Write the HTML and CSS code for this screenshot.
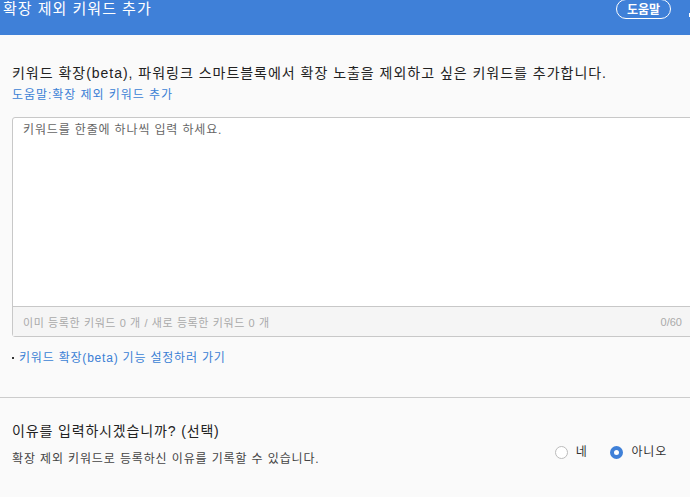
FILE: index.html
```html
<!DOCTYPE html>
<html lang="ko">
<head>
<meta charset="utf-8">
<link rel="stylesheet" href="styles.css">
</head>
<body>
<div class="page">
  <header class="header">
    <h1 class="title">확장 제외 키워드 추가</h1>
    <button class="help-btn">도움말</button>
    <span class="close-edge"></span>
  </header>
  <section class="intro">
    <p class="lead">키워드 확장(beta), 파워링크 스마트블록에서 확장 노출을 제외하고 싶은 키워드를 추가합니다.</p>
    <a class="help-link">도움말:확장 제외 키워드 추가</a>
    <div class="editor">
      <div class="editor-body">키워드를 한줄에 하나씩 입력 하세요.</div>
      <div class="editor-foot">
        <span>이미 등록한 키워드 0 개 / 새로 등록한 키워드 0 개</span>
        <span class="count">0/60</span>
      </div>
    </div>
    <div class="setting-link"><span class="dot"></span><a>키워드 확장(beta) 기능 설정하러 가기</a></div>
  </section>
  <section class="reason">
    <div class="reason-text">
      <h2 class="reason-title">이유를 입력하시겠습니까? (선택)</h2>
      <p class="reason-desc">확장 제외 키워드로 등록하신 이유를 기록할 수 있습니다.</p>
    </div>
    <div class="radios">
      <label class="radio"><span class="circle"></span>네</label>
      <label class="radio"><span class="circle checked"></span>아니오</label>
    </div>
  </section>
</div>
</body>
</html>
```
FILE: styles.css
```css
html, body {
  margin: 0;
  padding: 0;
  background: #fafafa;
  overflow: hidden;
}
body {
  font-family: "Liberation Sans", "Noto Sans CJK KR", sans-serif;
  color: #222;
}
.page {
  width: 690px;
}
.header {
  height: 35px;
  background: #3f80d8;
  display: flex;
  align-items: flex-start;
  padding: 0 0 0 3px;
  box-sizing: border-box;
}
.title {
  margin: 0;
  font-size: 15px;
  font-weight: normal;
  line-height: 18px;
  letter-spacing: 1px;
  color: #fff;
  flex: 1;
}
.help-btn {
  margin-top: -1px;
  height: 20px;
  width: 55px;
  border: 1.5px solid #fff;
  border-radius: 10px;
  background: transparent;
  color: #fff;
  font-family: "Noto Sans CJK KR", sans-serif;
  font-size: 12px;
  font-weight: bold;
  padding: 0;
  line-height: 16px;
}
.close-edge {
  width: 1px;
  height: 4px;
  background: #fff;
  margin: 13px 0 0 18px;
}
.intro {
  padding: 29px 0 0 12px;
}
.lead {
  margin: 0;
  font-size: 14px;
  line-height: 18px;
  letter-spacing: 0.98px;
  color: #222;
  white-space: nowrap;
}
.help-link {
  display: block;
  margin-top: 5px;
  font-size: 12px;
  line-height: 16px;
  letter-spacing: 0.95px;
  color: #3a7fd5;
}
.editor {
  margin-top: 14px;
  margin-right: -20px;
  border: 1px solid #c8c8c8;
  border-radius: 3px;
  background: #fff;
}
.editor-body {
  height: 188px;
  box-sizing: border-box;
  padding: 4px 10px;
  font-size: 12px;
  line-height: 16px;
  letter-spacing: 0.85px;
  color: #666;
}
.editor-foot {
  border-top: 1px solid #c8c8c8;
  background: #f5f5f5;
  height: 29px;
  display: flex;
  align-items: center;
  justify-content: space-between;
  padding: 0 27px 0 10px;
  font-size: 11px;
  letter-spacing: 0.6px;
  color: #aaa;
}
.count {
  letter-spacing: 0;
}
.setting-link {
  margin-top: 13px;
  display: flex;
  align-items: center;
  font-size: 12px;
  line-height: 16px;
  letter-spacing: 0.8px;
  color: #3a7fd5;
}
.dot {
  width: 2px;
  height: 2px;
  background: #333;
  margin-right: 5px;
}
.reason {
  margin-top: 31px;
  border-top: 1px solid #cccccc;
  padding: 24px 23px 0 12px;
  display: flex;
  justify-content: space-between;
  align-items: flex-start;
}
.reason-title {
  margin: 0;
  font-size: 14px;
  font-weight: normal;
  line-height: 18px;
  letter-spacing: 0.85px;
  color: #222;
}
.reason-desc {
  margin: 11px 0 0;
  font-size: 12px;
  line-height: 16px;
  letter-spacing: 0.87px;
  color: #444;
}
.radios {
  margin-top: 22px;
  display: flex;
  gap: 23px;
}
.radio {
  display: flex;
  align-items: center;
  gap: 8px;
  font-size: 12px;
  line-height: 16px;
  letter-spacing: 0.8px;
  color: #333;
}
.circle {
  width: 13px;
  height: 13px;
  box-sizing: border-box;
  border: 1px solid #bbb;
  border-radius: 50%;
  background: #fff;
}
.circle.checked {
  border: 4.5px solid #3f80d8;
  background: #fff;
}
```
